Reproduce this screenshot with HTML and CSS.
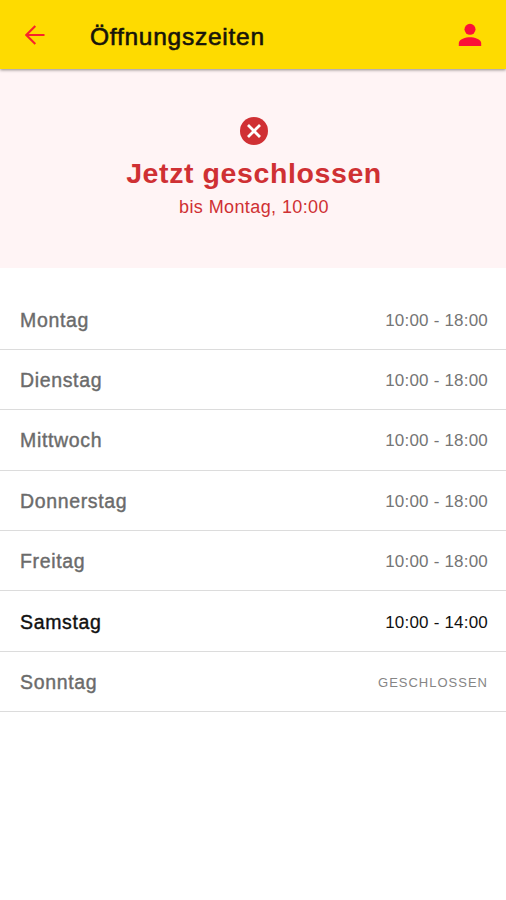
FILE: index.html
```
<!doctype html>
<html lang="de">

<head>
    <meta charset="UTF-8">
    <meta name="viewport" content="width=device-width, initial-scale=1.0">
    <title>Öffnungszeiten</title>
    <link rel="stylesheet" href="styles.css">
</head>

<body>
    <header class="topbar">
        <svg class="back" viewBox="0 0 20 20">
            <path d="M19.5 10H1.4M10.3 1L1.3 10l9 9" />
        </svg>
        <h1 class="title">Öffnungszeiten</h1>
        <svg class="user" viewBox="0 0 24 24">
            <circle cx="12" cy="6.3" r="5.5" />
            <path d="M.8 23v-3c0-4 7-5.8 11.2-5.8S23.2 16 23.2 20v3z" />
        </svg>
    </header>

    <section class="status">
        <svg class="status_icon" viewBox="0 0 28 28">
            <circle cx="14" cy="14" r="14" />
            <path d="M8 8l12 12M20 8L8 20" />
        </svg>
        <h2 class="status_title">Jetzt geschlossen</h2>
        <p class="status_text">bis Montag, 10:00</p>
    </section>

    <ul class="days">
        <li class="day"><span class="name">Montag</span><span class="time">10:00 - 18:00</span></li>
        <li class="day"><span class="name">Dienstag</span><span class="time">10:00 - 18:00</span></li>
        <li class="day"><span class="name">Mittwoch</span><span class="time">10:00 - 18:00</span></li>
        <li class="day"><span class="name">Donnerstag</span><span class="time">10:00 - 18:00</span></li>
        <li class="day"><span class="name">Freitag</span><span class="time">10:00 - 18:00</span></li>
        <li class="day today"><span class="name">Samstag</span><span class="time">10:00 - 14:00</span></li>
        <li class="day"><span class="name">Sonntag</span><span class="time closed">Geschlossen</span></li>
    </ul>
</body>

</html>
```
FILE: styles.css
```
* {
    box-sizing: border-box;
    margin: 0;
    padding: 0;
}

body {
    background: white;
    font-family: "Liberation Sans", Arial, sans-serif;
}

.topbar {
    position: relative;
    display: flex;
    align-items: center;
    height: 69px;
    padding: 1px 24px 0 25px;
    background: #fedb00;
    box-shadow: 0 1px 3px rgba(0, 0, 0, 0.45);
}

.back {
    width: 20px;
    height: 20px;
    fill: none;
    stroke: #f8232b;
    stroke-width: 2.1;
}

.title {
    flex: 1;
    margin: 4px 0 0 45px;
    font-size: 24.5px;
    line-height: 28px;
    font-weight: normal;
    letter-spacing: 0.75px;
    color: #16140a;
    -webkit-text-stroke: 0.6px #16140a;
}

.user {
    width: 24px;
    height: 24px;
    fill: #fb1038;
}

.status {
    display: flex;
    flex-direction: column;
    align-items: center;
    height: 199px;
    padding: 48px 0 0 2px;
    background: #fff4f5;
    color: #cf3033;
}

.status_icon {
    width: 28px;
    height: 28px;
    fill: #d03034;
}

.status_icon path {
    stroke: white;
    stroke-width: 2.8;
}

.status_title {
    margin-top: 12px;
    font-size: 28.5px;
    line-height: 32px;
    letter-spacing: 0.6px;
}

.status_text {
    margin-top: 7px;
    font-size: 18px;
    line-height: 22px;
    letter-spacing: 0.4px;
}

.days {
    padding-top: 21.4px;
    list-style: none;
}

.day {
    display: flex;
    align-items: center;
    justify-content: space-between;
    height: 60.4px;
    padding: 2px 18px 0 20px;
    border-bottom: 1px solid #dcdcdc;
    color: #6b6b6b;
}

.name {
    font-size: 19.5px;
    letter-spacing: 0.65px;
    -webkit-text-stroke: 0.4px currentColor;
}

.time {
    margin-top: 1px;
    font-size: 17px;
    letter-spacing: 0.2px;
    color: #757575;
}

.closed {
    font-size: 13px;
    letter-spacing: 1px;
    text-transform: uppercase;
    color: #858585;
}

.today,
.today .time {
    color: #111;
}
```
